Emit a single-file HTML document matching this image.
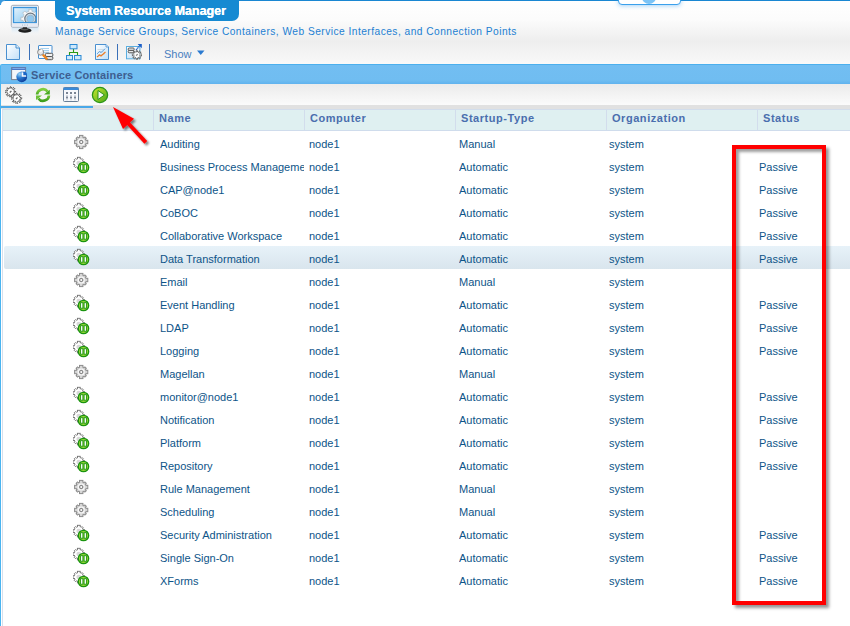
<!DOCTYPE html>
<html><head><meta charset="utf-8">
<style>
*{box-sizing:border-box}
html,body{margin:0;padding:0;width:850px;height:626px;overflow:hidden;background:#fff;font-family:"Liberation Sans",sans-serif}
.a{position:absolute}
#top{left:0;top:0;width:850px;height:65px;background:linear-gradient(#fff 0px,#fcfcfc 18px,#eeeeee 40px,#f6f6f6 58px,#fafafa 64px);border-top:1px solid #1a87d2}
#tab{left:55px;top:0;width:184px;height:21px;background:#168ad2;border-radius:0 0 7px 7px;color:#fff;font:bold 12.5px "Liberation Sans",sans-serif;line-height:21px;padding-left:11px;padding-top:1px;white-space:nowrap;text-shadow:0.35px 0 0 #fff}
#sub{left:55px;top:25px;font-size:10.2px;color:#1c80d2;white-space:nowrap;letter-spacing:0.47px;line-height:14px}
#mini{left:618px;top:-3px;width:63px;height:8px;background:#fff;border:1px solid #3aa0ec;border-radius:0 0 4px 4px;box-shadow:0 1px 4px rgba(60,160,240,.45);overflow:hidden}
.sep{width:1px;height:16px;background:#3a70b8;top:44px}
#show{left:164px;top:47px;font-size:11px;color:#4a80c0;line-height:14px}
#panelh{left:0;top:64px;width:850px;height:20px;background:linear-gradient(#72bef2 0,#70bdf1 80%,#60b3ee 100%);border-top:1px solid #4cb0ee;border-left:1px solid #4ab4f0;border-radius:2px 0 0 0}
#ptitle{left:31px;top:68px;font:bold 11px "Liberation Sans",sans-serif;color:#3e5e90;letter-spacing:0.15px;line-height:14px}
#ptool{left:0;top:84px;width:850px;height:21px;background:linear-gradient(#ebebeb,#f6f6f6 70%,#fbfbfb);border-left:1px solid #4ab4f0}
#strip{left:0;top:105px;width:850px;height:4px;background:#e1e1e1;border-left:1px solid #4ab4f0}
#active{left:0;top:106px;width:93px;height:2px;background:#4aa8e8}
#lborder{left:0;top:105px;width:1px;height:521px;background:#4ab4f0}
#lborder2{left:2px;top:109px;width:1px;height:517px;background:#d6e0ee}
#hdr{left:3px;top:109px;width:847px;height:22px;background:#dff0f1;border-top:1px solid #d2ddec;border-bottom:1px solid #cfdcec}
.hd{top:0;height:20px;border-left:1px solid #d2ddec;font:bold 11px "Liberation Sans",sans-serif;color:#4a6eae;line-height:16px;padding-left:5px;letter-spacing:0.55px;white-space:nowrap}
.row{left:3px;width:847px;height:23px}
.c{position:absolute;top:2px;height:21px;line-height:23px;font-size:11px;color:#0d5488;white-space:nowrap;overflow:hidden}
#hl{left:4px;top:246px;width:852px;height:23px;background:linear-gradient(#e7f2f9,#d9e5ed);border-radius:2px}
#redbox{left:732px;top:145px;width:94px;height:460px;border:4px solid #ff0000;box-shadow:3px 3px 3px rgba(0,0,0,.42), inset 3px 3px 3px rgba(0,0,0,.38)}
</style></head><body>
<svg width="0" height="0" style="position:absolute">
<defs>
<radialGradient id="gfill" cx="0.4" cy="0.4" r="0.7"><stop offset="0" stop-color="#f8f8f8"/><stop offset="1" stop-color="#cfcfcf"/></radialGradient>
<linearGradient id="pgrn" x1="0" y1="0" x2="0" y2="1"><stop offset="0" stop-color="#8ad43a"/><stop offset="1" stop-color="#3a9a18"/></linearGradient>
<g id="gear"><g transform="translate(8.2,9)">
<circle r="5.2" fill="#d6d6d6" stroke="#8c8c8c" stroke-width="1"/>
<g fill="#d6d6d6" stroke="#8c8c8c" stroke-width="1"><rect x="-1.7" y="-6.6" width="3.4" height="3.5999999999999996" transform="rotate(0)"/><rect x="-1.7" y="-6.6" width="3.4" height="3.5999999999999996" transform="rotate(90)"/><rect x="-1.7" y="-6.6" width="3.4" height="3.5999999999999996" transform="rotate(180)"/><rect x="-1.7" y="-6.6" width="3.4" height="3.5999999999999996" transform="rotate(270)"/><rect x="-1.0" y="-6.2" width="2.0" height="3.2" transform="rotate(45)"/><rect x="-1.0" y="-6.2" width="2.0" height="3.2" transform="rotate(135)"/><rect x="-1.0" y="-6.2" width="2.0" height="3.2" transform="rotate(225)"/><rect x="-1.0" y="-6.2" width="2.0" height="3.2" transform="rotate(315)"/></g>
<circle r="4.6" fill="#d6d6d6"/>
<circle r="3.6" fill="#f6f6f6"/>
<circle r="1.6" fill="#fff" stroke="#8a8a8a" stroke-width="1.3"/>
</g></g>
<g id="gearp"><g transform="translate(5.8,7.1)">
<circle r="4.6" fill="#fff" stroke="#707070" stroke-width="0.9" stroke-dasharray="1 0.6"/>
<g fill="#fff" stroke="#707070" stroke-width="0.9"><rect x="-1.4" y="-5.8" width="2.8" height="2.8" transform="rotate(0)"/><rect x="-1.4" y="-5.8" width="2.8" height="2.8" transform="rotate(90)"/><rect x="-1.4" y="-5.8" width="2.8" height="2.8" transform="rotate(180)"/><rect x="-1.4" y="-5.8" width="2.8" height="2.8" transform="rotate(270)"/><rect x="-0.9" y="-5.5" width="1.8" height="2.5" transform="rotate(45)"/><rect x="-0.9" y="-5.5" width="1.8" height="2.5" transform="rotate(135)"/><rect x="-0.9" y="-5.5" width="1.8" height="2.5" transform="rotate(225)"/><rect x="-0.9" y="-5.5" width="1.8" height="2.5" transform="rotate(315)"/></g>
<circle r="4.0" fill="#fff"/>
<circle r="2.4" fill="#c8c8c8" opacity="0.7"/>
</g>
<circle cx="10.5" cy="11.5" r="5.2" fill="#96d436" stroke="#1a9410" stroke-width="1.3"/>
<rect x="7.6" y="8.7" width="2.3" height="5.5" fill="#fff" stroke="#1a9410" stroke-width="0.9"/>
<rect x="11.1" y="8.7" width="2.3" height="5.5" fill="#fff" stroke="#1a9410" stroke-width="0.9"/>
</g>
</defs></svg>
<div id="top" class="a"></div>
<!-- logo -->
<svg class="a" style="left:9px;top:3px" width="34" height="34" viewBox="0 0 34 34">
  <defs>
    <linearGradient id="scr" x1="0" y1="0" x2="1" y2="1"><stop offset="0" stop-color="#e4f2fc"/><stop offset="1" stop-color="#80c4f0"/></linearGradient>
    <linearGradient id="refl" x1="0" y1="0" x2="0" y2="1"><stop offset="0" stop-color="#b4d8f4"/><stop offset="1" stop-color="#fff" stop-opacity="0"/></linearGradient>
    <clipPath id="scl"><rect x="4.5" y="4.5" width="22.8" height="15.2"/></clipPath>
  </defs>
  <rect x="2.5" y="24" width="27" height="9" fill="url(#refl)" opacity="0.6"/>
  <rect x="2.3" y="2.3" width="27.2" height="21.8" rx="1.5" fill="#f2f4f8" stroke="#a4acb6" stroke-width="1"/>
  <rect x="4.5" y="4.5" width="22.8" height="15.2" fill="url(#scr)"/>
  <g clip-path="url(#scl)">
    <path d="M19.92,8.35 L19.82,6.33 L22.98,6.33 L22.88,8.35 L25.62,9.48 L26.98,7.99 L29.21,10.22 L27.72,11.58 L28.85,14.32 L30.87,14.22 L30.87,17.38 L28.85,17.28 L27.72,20.02 L29.21,21.38 L26.98,23.61 L25.62,22.12 L22.88,23.25 L22.98,25.27 L19.82,25.27 L19.92,23.25 L17.18,22.12 L15.82,23.61 L13.59,21.38 L15.08,20.02 L13.95,17.28 L11.93,17.38 L11.93,14.22 L13.95,14.32 L15.08,11.58 L13.59,10.22 L15.82,7.99 L17.18,9.48Z" fill="#f6f8fa" stroke="#b0b8c0" stroke-width="0.7"/>
    <circle cx="21.4" cy="15.8" r="5.6" fill="#c8dcea" stroke="#707880" stroke-width="1.2"/>
    <circle cx="21.4" cy="15.8" r="3.6" fill="#90c8ee" stroke="#a0b4c4" stroke-width="0.8"/>
  </g>
  <rect x="4.5" y="4.5" width="22.8" height="15.2" fill="none" stroke="#3a94dc" stroke-width="1.3"/>
  <rect x="3" y="20.4" width="26" height="3.3" fill="#e6eaf4"/>
  <circle cx="13.5" cy="22" r="0.5" fill="#8ab"/><circle cx="15.9" cy="22" r="0.5" fill="#8ab"/><circle cx="18.3" cy="22" r="0.5" fill="#8ab"/>
  <rect x="13.8" y="24.2" width="4.2" height="2.5" fill="#333"/>
  <ellipse cx="15.9" cy="27.4" rx="6.5" ry="2.3" fill="#1e1e1e"/>
  <ellipse cx="15.5" cy="26.6" rx="4" ry="0.8" fill="#555"/>
</svg>
<svg class="a" style="left:0;top:0" width="5" height="5"><path d="M0,0 H5 V1 A4,4 0 0 0 1,5 H0 Z" fill="#3a9ade"/></svg>
<div id="tab" class="a">System Resource Manager</div>
<div id="mini" class="a"><div style="position:absolute;left:23px;top:-7px;width:14px;height:13px;border-radius:50%;background:#7cc4f6"></div></div>
<div id="sub" class="a">Manage Service Groups, Service Containers, Web Service Interfaces, and Connection Points</div>

<!-- main toolbar -->
<svg class="a" style="left:5px;top:43px" width="17" height="18" viewBox="0 0 17 18">
  <defs><linearGradient id="pg" x1="0" y1="0" x2="1" y2="1"><stop offset="0" stop-color="#fff"/><stop offset="1" stop-color="#c2e0f8"/></linearGradient></defs>
  <path d="M1.5,1.5 h9.5 l3.5,3.5 v11.5 h-13 z" fill="url(#pg)" stroke="#4a90d0" stroke-width="1"/>
  <path d="M11,1.5 v3.5 h3.5" fill="#e0f0fc" stroke="#4a90d0" stroke-width="1"/>
</svg>
<div class="a sep" style="left:29px"></div>
<svg class="a" style="left:37px;top:44px" width="18" height="17" viewBox="0 0 18 17">
  <rect x="1.5" y="1.5" width="13.5" height="13" rx="0.5" fill="#fafcff" stroke="#4a90d0" stroke-width="1"/>
  <path d="M4,4.5 h8 M4,6.6 h8 M4,8.7 h8" stroke="#a6d2f0" stroke-width="1.2"/>
  <rect x="8.3" y="9.3" width="7.6" height="3.2" rx="1.4" fill="#f2f2f2" stroke="#555" stroke-width="1"/>
  <rect x="8.3" y="12.5" width="7.6" height="3.2" rx="1.4" fill="#dcdcdc" stroke="#555" stroke-width="1"/>
  <path d="M5.8,10.6 L10.2,15.2" stroke="#f0861e" stroke-width="2.3"/>
  <circle cx="3.6" cy="8.2" r="3" fill="#e6e6e6" stroke="#8a8a8a" stroke-width="1"/>
  <path d="M3.3,7.8 L5.2,5.6" stroke="#fff" stroke-width="1.6"/>
</svg>
<svg class="a" style="left:65px;top:43px" width="17" height="18" viewBox="0 0 17 18">
  <path d="M8.5,5.5 v4 M4.5,12.5 v-3 h8 v3" fill="none" stroke="#2a9a18" stroke-width="1.1"/>
  <rect x="5" y="1.5" width="7" height="4.3" fill="#cfe8fb" stroke="#2a8ad4" stroke-width="1"/>
  <rect x="1.5" y="12.5" width="6" height="4.3" fill="#cfe8fb" stroke="#2a8ad4" stroke-width="1"/>
  <rect x="9.5" y="12.5" width="6.5" height="4.3" fill="#cfe8fb" stroke="#2a8ad4" stroke-width="1"/>
</svg>
<svg class="a" style="left:94px;top:43px" width="17" height="18" viewBox="0 0 17 18">
  <path d="M1.5,1.5 h10.5 l2.5,2.5 v12.5 h-13 z" fill="url(#pg)" stroke="#4a90d0" stroke-width="1"/>
  <path d="M12,1.5 v2.5 h2.5" fill="#e0f0fc" stroke="#4a90d0" stroke-width="0.8"/>
  <path d="M3.5,6.5 h7 M3.5,9 h7 M3.5,11.5 h7" stroke="#b8c4cc" stroke-width="0.5"/>
  <path d="M3,11 l2.5,-2.5 l1.5,1 l4.5,-4" fill="none" stroke="#3a8ad8" stroke-width="1" stroke-dasharray="1 0.4"/>
  <path d="M3,14 l2.5,-2 l1.5,1 l4.5,-4" fill="none" stroke="#f07a20" stroke-width="1.1"/>
</svg>
<div class="a sep" style="left:117px"></div>
<svg class="a" style="left:125px;top:43px" width="18" height="18" viewBox="0 0 18 18">
  <defs><linearGradient id="sq" x1="0" y1="0" x2="0" y2="1"><stop offset="0" stop-color="#fff"/><stop offset="1" stop-color="#cfe6f8"/></linearGradient></defs>
  <rect x="1.5" y="3.5" width="13.4" height="12.3" fill="url(#sq)" stroke="#5aaee0" stroke-width="1"/>
  <rect x="3.2" y="5" width="6" height="2.4" rx="1" fill="#f0f0f0" stroke="#555" stroke-width="1"/>
  <rect x="3.2" y="7.4" width="6" height="2.4" rx="1" fill="#e8e8e8" stroke="#555" stroke-width="1"/>
  <path d="M11,6.8 L15.2,2.4" stroke="#1a5ec8" stroke-width="1.3" stroke-dasharray="1.2 0.5"/>
  <path d="M12.6,1 H16.8 V5.2 Z" fill="#1a5ec8"/>
  <path d="M11.28,8.76 L11.14,7.36 L12.66,7.36 L12.52,8.76 L13.68,9.24 L14.57,8.16 L15.64,9.23 L14.56,10.12 L15.04,11.28 L16.44,11.14 L16.44,12.66 L15.04,12.52 L14.56,13.68 L15.64,14.57 L14.57,15.64 L13.68,14.56 L12.52,15.04 L12.66,16.44 L11.14,16.44 L11.28,15.04 L10.12,14.56 L9.23,15.64 L8.16,14.57 L9.24,13.68 L8.76,12.52 L7.36,12.66 L7.36,11.14 L8.76,11.28 L9.24,10.12 L8.16,9.23 L9.23,8.16 L10.12,9.24Z" fill="#fafafa" stroke="#5a5a5a" stroke-width="1.1" stroke-dasharray="1.1 0.6"/>
  <path d="M11.2,12.6 l1.4,-1.4" stroke="#777" stroke-width="1.2"/>
</svg>
<div class="a sep" style="left:149px"></div>
<div id="show" class="a">Show</div>
<svg class="a" style="left:197px;top:50px" width="8" height="6" viewBox="0 0 8 6"><path d="M0,0.5 h7.5 l-3.75,4.5 z" fill="#2a7ad0"/></svg>

<!-- panel -->
<div id="panelh" class="a"></div>
<svg class="a" style="left:10px;top:66px" width="18" height="17" viewBox="0 0 18 17">
  <defs><radialGradient id="pie" cx="0.3" cy="0.25" r="0.8"><stop offset="0" stop-color="#9ad4f8"/><stop offset="0.45" stop-color="#2a7ad0"/><stop offset="1" stop-color="#0a3a98"/></radialGradient></defs>
  <rect x="1.6" y="1.6" width="14" height="12" fill="#f4f6fa" stroke="#7a8290" stroke-width="1"/>
  <rect x="1.6" y="1.4" width="14" height="2.6" fill="#4a78c8"/>
  <rect x="2.4" y="2.2" width="12.4" height="0.8" fill="#8ab4ee"/>
  <circle cx="11.7" cy="10.8" r="5.4" fill="url(#pie)"/>
  <path d="M11.7,10.8 L11.7,6.2 A4.6,4.6 0 0 1 16.3,10.8 Z" fill="#f4f8fc"/>
  <path d="M13.3,9.3 L13.3,5.4 A3.9,3.9 0 0 1 17.2,9.3 Z" fill="#1a68c8"/>
</svg>
<div id="ptitle" class="a">Service Containers</div>
<div id="ptool" class="a"></div>
<svg class="a" style="left:4px;top:86px" width="20" height="19" viewBox="0 0 20 19">
  <g fill="#fff" stroke="#5e5e5e" stroke-width="1.2" stroke-dasharray="1.1 0.6">
    <path d="M5.92,2.27 L5.78,0.77 L7.42,0.77 L7.28,2.27 L8.54,2.79 L9.51,1.63 L10.67,2.79 L9.51,3.76 L10.03,5.02 L11.53,4.88 L11.53,6.52 L10.03,6.38 L9.51,7.64 L10.67,8.61 L9.51,9.77 L8.54,8.61 L7.28,9.13 L7.42,10.63 L5.78,10.63 L5.92,9.13 L4.66,8.61 L3.69,9.77 L2.53,8.61 L3.69,7.64 L3.17,6.38 L1.67,6.52 L1.67,4.88 L3.17,5.02 L3.69,3.76 L2.53,2.79 L3.69,1.63 L4.66,2.79Z"/><path d="M12.02,8.87 L11.88,7.37 L13.52,7.37 L13.38,8.87 L14.64,9.39 L15.61,8.23 L16.77,9.39 L15.61,10.36 L16.13,11.62 L17.63,11.48 L17.63,13.12 L16.13,12.98 L15.61,14.24 L16.77,15.21 L15.61,16.37 L14.64,15.21 L13.38,15.73 L13.52,17.23 L11.88,17.23 L12.02,15.73 L10.76,15.21 L9.79,16.37 L8.63,15.21 L9.79,14.24 L9.27,12.98 L7.77,13.12 L7.77,11.48 L9.27,11.62 L9.79,10.36 L8.63,9.39 L9.79,8.23 L10.76,9.39Z"/>
  </g>
  <g stroke="#666" stroke-width="1.3"><path d="M5.8,6.5 l1.6,-1.6"/><path d="M11.9,13.1 l1.6,-1.6"/></g>
</svg>
<svg class="a" style="left:34px;top:86px" width="18" height="18" viewBox="0 0 18 18">
  <defs><linearGradient id="gr" x1="0" y1="0" x2="0" y2="1"><stop offset="0" stop-color="#82d040"/><stop offset="1" stop-color="#3e9e1c"/></linearGradient>
  <clipPath id="rt"><rect x="0" y="0" width="18" height="8.4"/></clipPath><clipPath id="rb"><rect x="0" y="9.5" width="18" height="9"/></clipPath></defs>
  <path clip-path="url(#rt)" d="M3.2,10 A5.8,5.8 0 0 1 13.6,5.6" fill="none" stroke="url(#gr)" stroke-width="2.6"/>
  <path clip-path="url(#rb)" d="M14.8,8 A5.8,5.8 0 0 1 4.4,12.4" fill="none" stroke="url(#gr)" stroke-width="2.6"/>
  <path d="M15.8,3.7 L15.8,8.4 L10,8.4 Z" fill="#48aa20"/>
  <path d="M2,9.5 L8,9.5 L2,14 Z" fill="#6cc036"/>
</svg>
<svg class="a" style="left:62px;top:86px" width="18" height="17" viewBox="0 0 18 17">
  <rect x="1.5" y="1.5" width="15" height="14" rx="1" fill="#f6f8fc" stroke="#6a7e96" stroke-width="1"/>
  <rect x="1.5" y="1.5" width="15" height="2.5" fill="#3a8ad8"/>
  <g fill="#7a8494"><rect x="4" y="6" width="2" height="2"/><rect x="8" y="6" width="2" height="2"/><rect x="12" y="6" width="2" height="2"/>
  <rect x="4" y="10.5" width="2" height="2"/><rect x="8" y="10.5" width="2" height="2"/><rect x="12" y="10.5" width="2" height="2"/></g>
  <g fill="#c4cad4"><rect x="4" y="9" width="2" height="0.7"/><rect x="8" y="9" width="2" height="0.7"/><rect x="12" y="9" width="2" height="0.7"/>
  <rect x="4" y="13.5" width="2" height="0.7"/><rect x="8" y="13.5" width="2" height="0.7"/><rect x="12" y="13.5" width="2" height="0.7"/></g>
</svg>
<svg class="a" style="left:91px;top:86px" width="18" height="18" viewBox="0 0 18 18">
  <defs><linearGradient id="pl" x1="0" y1="0" x2="1" y2="1"><stop offset="0" stop-color="#c8e830"/><stop offset="1" stop-color="#4aa818"/></linearGradient></defs>
  <circle cx="9" cy="9" r="7.6" fill="url(#pl)" stroke="#2a9418" stroke-width="1.3"/>
  <path d="M7,4.5 L13.5,9 L7,13.5 z" fill="#f4f8f0" stroke="#2a9418" stroke-width="1"/>
</svg>
<div id="strip" class="a"></div>
<div id="active" class="a"></div>
<div id="lborder" class="a"></div>
<div id="lborder2" class="a"></div>

<div id="hdr" class="a">
  <div class="a hd" style="left:150px;width:151px">Name</div>
  <div class="a hd" style="left:301px;width:151px">Computer</div>
  <div class="a hd" style="left:452px;width:151px">Startup-Type</div>
  <div class="a hd" style="left:603px;width:151px">Organization</div>
  <div class="a hd" style="left:754px;width:96px">Status</div>
</div>
<div id="hl" class="a"></div>
<div id="rows"><div class="a row" style="top:131px"><svg class="a" style="left:70px;top:2px" width="20" height="20"><use href="#gear"/></svg><div class="c" style="left:157px;width:144px">Auditing</div><div class="c" style="left:306px;width:145px">node1</div><div class="c" style="left:456px;width:145px">Manual</div><div class="c" style="left:606px;width:145px">system</div></div>
<div class="a row" style="top:154px"><svg class="a" style="left:70px;top:2px" width="20" height="20"><use href="#gearp"/></svg><div class="c" style="left:157px;width:144px">Business Process Management</div><div class="c" style="left:306px;width:145px">node1</div><div class="c" style="left:456px;width:145px">Automatic</div><div class="c" style="left:606px;width:145px">system</div><div class="c" style="left:756px;width:90px">Passive</div></div>
<div class="a row" style="top:177px"><svg class="a" style="left:70px;top:2px" width="20" height="20"><use href="#gearp"/></svg><div class="c" style="left:157px;width:144px">CAP@node1</div><div class="c" style="left:306px;width:145px">node1</div><div class="c" style="left:456px;width:145px">Automatic</div><div class="c" style="left:606px;width:145px">system</div><div class="c" style="left:756px;width:90px">Passive</div></div>
<div class="a row" style="top:200px"><svg class="a" style="left:70px;top:2px" width="20" height="20"><use href="#gearp"/></svg><div class="c" style="left:157px;width:144px">CoBOC</div><div class="c" style="left:306px;width:145px">node1</div><div class="c" style="left:456px;width:145px">Automatic</div><div class="c" style="left:606px;width:145px">system</div><div class="c" style="left:756px;width:90px">Passive</div></div>
<div class="a row" style="top:223px"><svg class="a" style="left:70px;top:2px" width="20" height="20"><use href="#gearp"/></svg><div class="c" style="left:157px;width:144px">Collaborative Workspace</div><div class="c" style="left:306px;width:145px">node1</div><div class="c" style="left:456px;width:145px">Automatic</div><div class="c" style="left:606px;width:145px">system</div><div class="c" style="left:756px;width:90px">Passive</div></div>
<div class="a row" style="top:246px"><svg class="a" style="left:70px;top:2px" width="20" height="20"><use href="#gearp"/></svg><div class="c" style="left:157px;width:144px">Data Transformation</div><div class="c" style="left:306px;width:145px">node1</div><div class="c" style="left:456px;width:145px">Automatic</div><div class="c" style="left:606px;width:145px">system</div><div class="c" style="left:756px;width:90px">Passive</div></div>
<div class="a row" style="top:269px"><svg class="a" style="left:70px;top:2px" width="20" height="20"><use href="#gear"/></svg><div class="c" style="left:157px;width:144px">Email</div><div class="c" style="left:306px;width:145px">node1</div><div class="c" style="left:456px;width:145px">Manual</div><div class="c" style="left:606px;width:145px">system</div></div>
<div class="a row" style="top:292px"><svg class="a" style="left:70px;top:2px" width="20" height="20"><use href="#gearp"/></svg><div class="c" style="left:157px;width:144px">Event Handling</div><div class="c" style="left:306px;width:145px">node1</div><div class="c" style="left:456px;width:145px">Automatic</div><div class="c" style="left:606px;width:145px">system</div><div class="c" style="left:756px;width:90px">Passive</div></div>
<div class="a row" style="top:315px"><svg class="a" style="left:70px;top:2px" width="20" height="20"><use href="#gearp"/></svg><div class="c" style="left:157px;width:144px">LDAP</div><div class="c" style="left:306px;width:145px">node1</div><div class="c" style="left:456px;width:145px">Automatic</div><div class="c" style="left:606px;width:145px">system</div><div class="c" style="left:756px;width:90px">Passive</div></div>
<div class="a row" style="top:338px"><svg class="a" style="left:70px;top:2px" width="20" height="20"><use href="#gearp"/></svg><div class="c" style="left:157px;width:144px">Logging</div><div class="c" style="left:306px;width:145px">node1</div><div class="c" style="left:456px;width:145px">Automatic</div><div class="c" style="left:606px;width:145px">system</div><div class="c" style="left:756px;width:90px">Passive</div></div>
<div class="a row" style="top:361px"><svg class="a" style="left:70px;top:2px" width="20" height="20"><use href="#gear"/></svg><div class="c" style="left:157px;width:144px">Magellan</div><div class="c" style="left:306px;width:145px">node1</div><div class="c" style="left:456px;width:145px">Manual</div><div class="c" style="left:606px;width:145px">system</div></div>
<div class="a row" style="top:384px"><svg class="a" style="left:70px;top:2px" width="20" height="20"><use href="#gearp"/></svg><div class="c" style="left:157px;width:144px">monitor@node1</div><div class="c" style="left:306px;width:145px">node1</div><div class="c" style="left:456px;width:145px">Automatic</div><div class="c" style="left:606px;width:145px">system</div><div class="c" style="left:756px;width:90px">Passive</div></div>
<div class="a row" style="top:407px"><svg class="a" style="left:70px;top:2px" width="20" height="20"><use href="#gearp"/></svg><div class="c" style="left:157px;width:144px">Notification</div><div class="c" style="left:306px;width:145px">node1</div><div class="c" style="left:456px;width:145px">Automatic</div><div class="c" style="left:606px;width:145px">system</div><div class="c" style="left:756px;width:90px">Passive</div></div>
<div class="a row" style="top:430px"><svg class="a" style="left:70px;top:2px" width="20" height="20"><use href="#gearp"/></svg><div class="c" style="left:157px;width:144px">Platform</div><div class="c" style="left:306px;width:145px">node1</div><div class="c" style="left:456px;width:145px">Automatic</div><div class="c" style="left:606px;width:145px">system</div><div class="c" style="left:756px;width:90px">Passive</div></div>
<div class="a row" style="top:453px"><svg class="a" style="left:70px;top:2px" width="20" height="20"><use href="#gearp"/></svg><div class="c" style="left:157px;width:144px">Repository</div><div class="c" style="left:306px;width:145px">node1</div><div class="c" style="left:456px;width:145px">Automatic</div><div class="c" style="left:606px;width:145px">system</div><div class="c" style="left:756px;width:90px">Passive</div></div>
<div class="a row" style="top:476px"><svg class="a" style="left:70px;top:2px" width="20" height="20"><use href="#gear"/></svg><div class="c" style="left:157px;width:144px">Rule Management</div><div class="c" style="left:306px;width:145px">node1</div><div class="c" style="left:456px;width:145px">Manual</div><div class="c" style="left:606px;width:145px">system</div></div>
<div class="a row" style="top:499px"><svg class="a" style="left:70px;top:2px" width="20" height="20"><use href="#gear"/></svg><div class="c" style="left:157px;width:144px">Scheduling</div><div class="c" style="left:306px;width:145px">node1</div><div class="c" style="left:456px;width:145px">Manual</div><div class="c" style="left:606px;width:145px">system</div></div>
<div class="a row" style="top:522px"><svg class="a" style="left:70px;top:2px" width="20" height="20"><use href="#gearp"/></svg><div class="c" style="left:157px;width:144px">Security Administration</div><div class="c" style="left:306px;width:145px">node1</div><div class="c" style="left:456px;width:145px">Automatic</div><div class="c" style="left:606px;width:145px">system</div><div class="c" style="left:756px;width:90px">Passive</div></div>
<div class="a row" style="top:545px"><svg class="a" style="left:70px;top:2px" width="20" height="20"><use href="#gearp"/></svg><div class="c" style="left:157px;width:144px">Single Sign-On</div><div class="c" style="left:306px;width:145px">node1</div><div class="c" style="left:456px;width:145px">Automatic</div><div class="c" style="left:606px;width:145px">system</div><div class="c" style="left:756px;width:90px">Passive</div></div>
<div class="a row" style="top:568px"><svg class="a" style="left:70px;top:2px" width="20" height="20"><use href="#gearp"/></svg><div class="c" style="left:157px;width:144px">XForms</div><div class="c" style="left:306px;width:145px">node1</div><div class="c" style="left:456px;width:145px">Automatic</div><div class="c" style="left:606px;width:145px">system</div><div class="c" style="left:756px;width:90px">Passive</div></div></div><!--/rows-->

<!-- arrow -->
<svg class="a" style="left:105px;top:100px" width="50" height="52" viewBox="0 0 50 52">
  <defs><filter id="sh" x="-30%" y="-30%" width="160%" height="160%"><feGaussianBlur in="SourceAlpha" stdDeviation="1.2"/><feOffset dx="2" dy="2"/><feComponentTransfer><feFuncA type="linear" slope="0.5"/></feComponentTransfer><feMerge><feMergeNode/><feMergeNode in="SourceGraphic"/></feMerge></filter></defs>
  <g filter="url(#sh)">
    <path d="M8,7 L29,18.7 L18,29 z" fill="#ff0000"/>
    <path d="M22,22 L40.8,42.4" stroke="#ff0000" stroke-width="3.8"/>
  </g>
</svg>
<div id="redbox" class="a"></div>
</body></html>
